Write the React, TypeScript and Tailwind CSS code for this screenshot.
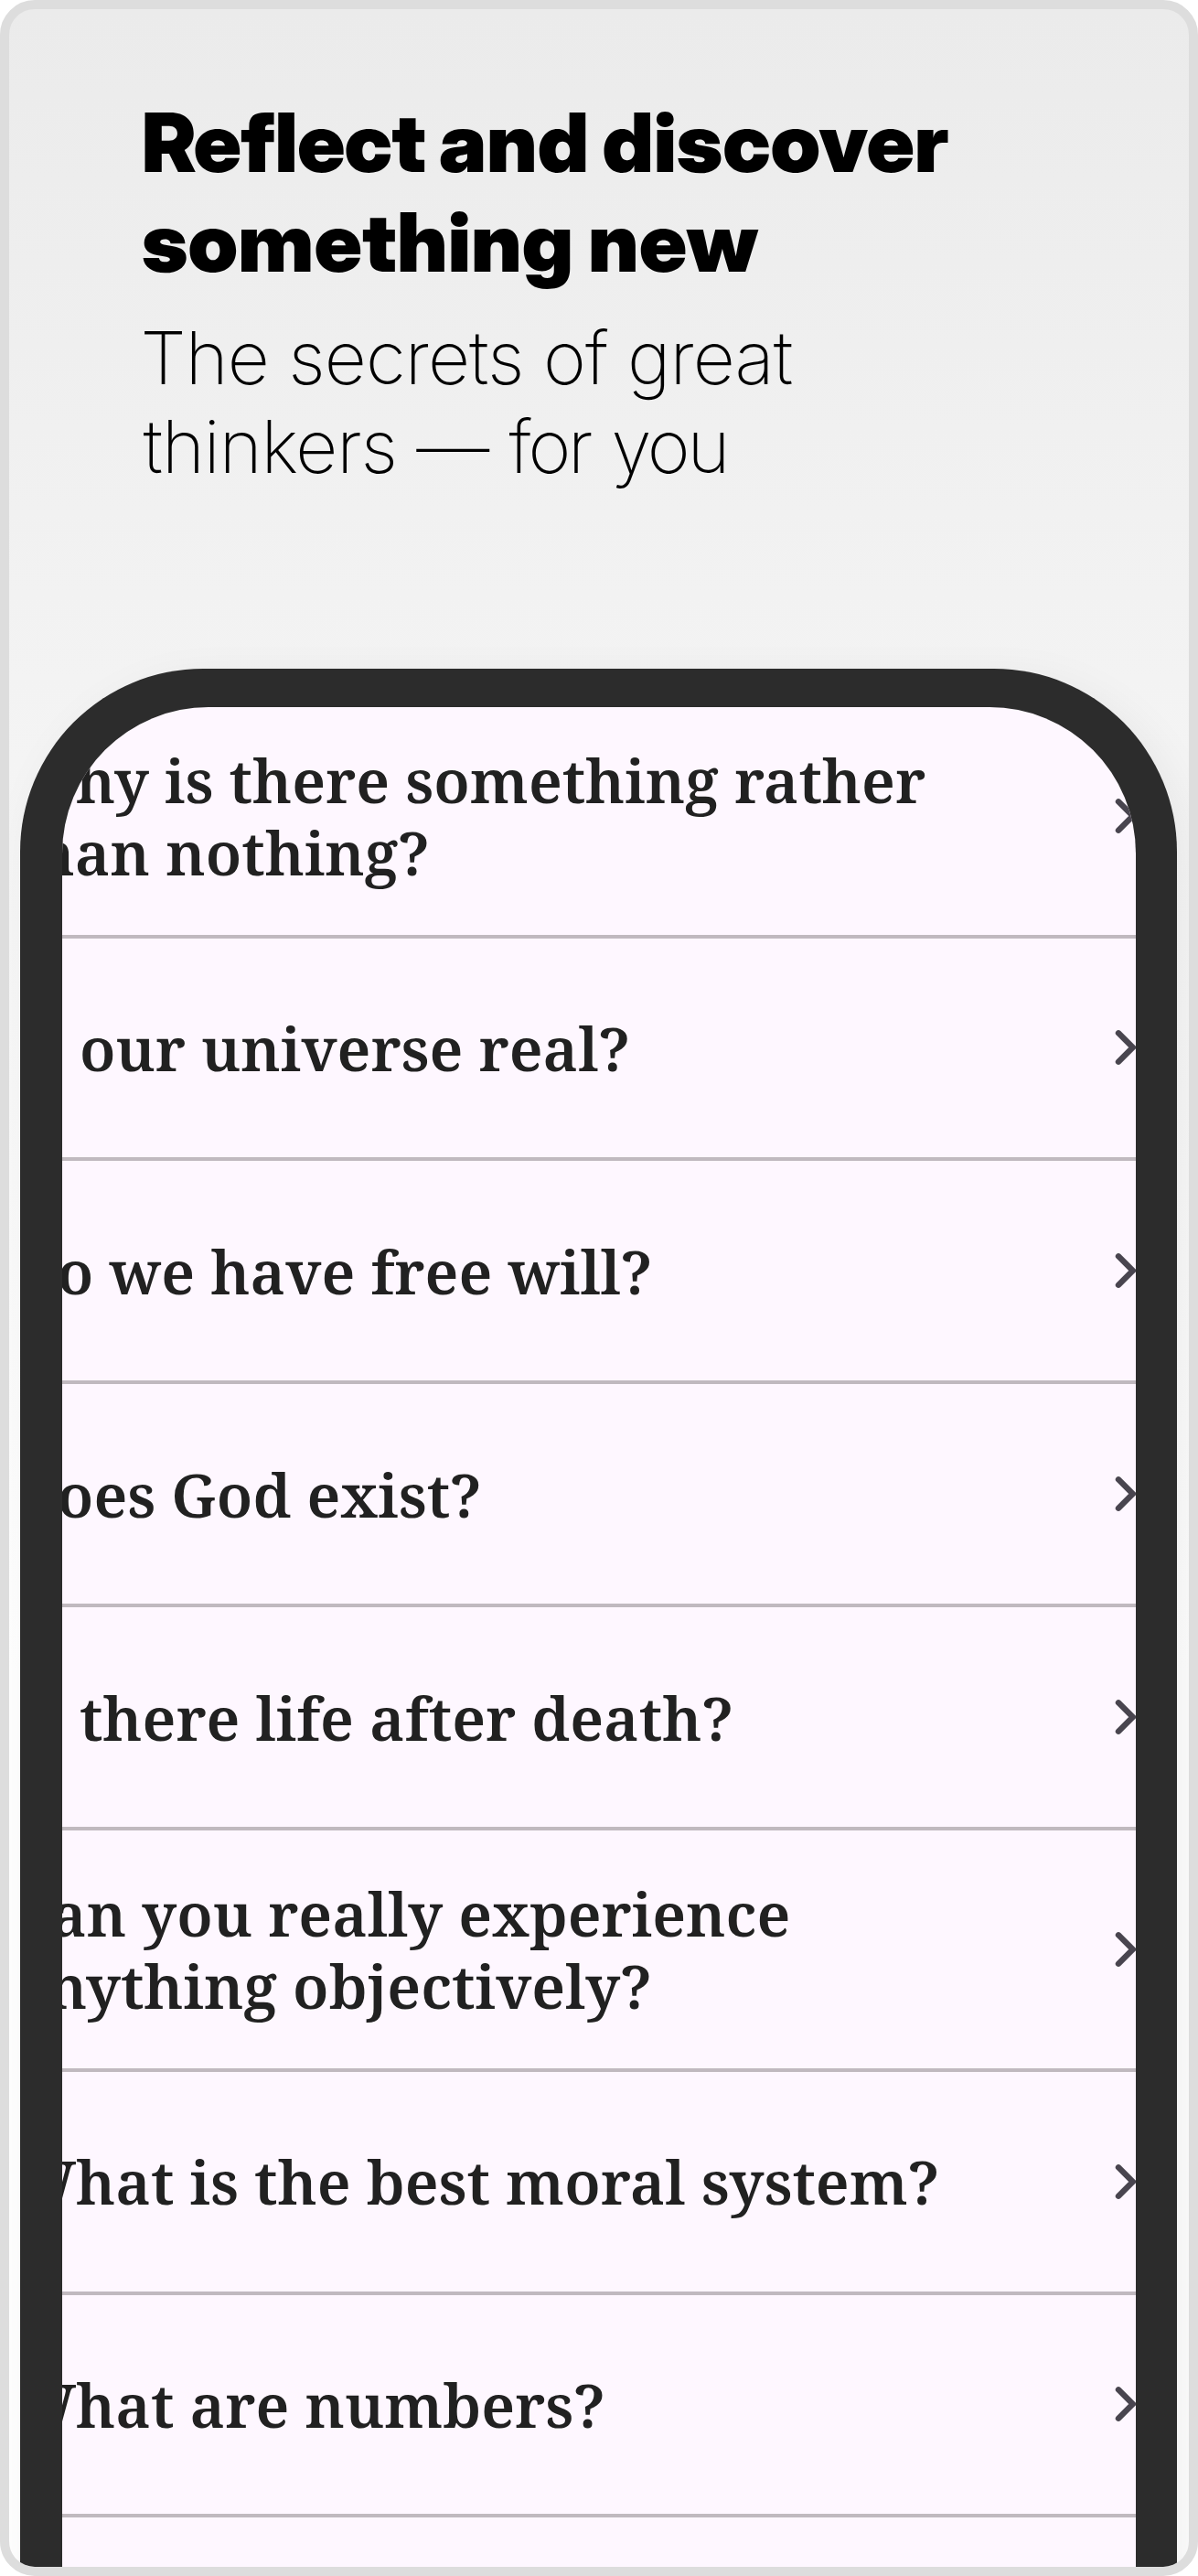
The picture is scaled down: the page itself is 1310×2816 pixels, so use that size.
import * as React from "react";

type Question = {
  lines: string[];
};

const questions: Question[] = [
  { lines: ["Why is there something rather", "than nothing?"] },
  { lines: ["Is our universe real?"] },
  { lines: ["Do we have free will?"] },
  { lines: ["Does God exist?"] },
  { lines: ["Is there life after death?"] },
  { lines: ["Can you really experience", "anything objectively?"] },
  { lines: ["What is the best moral system?"] },
  { lines: ["What are numbers?"] },
];

function Chevron() {
  return (
    <svg className="h-10 w-8 shrink-0" viewBox="0 0 32 40" fill="none">
      <path d="M5 4.3 20.7 20 5 35.7" stroke="#49454f" strokeWidth="6.4" strokeLinecap="round" />
    </svg>
  );
}

function QuestionRow({ question }: { question: Question }) {
  return (
    <div
      className={
        question.lines.length > 1
          ? "flex h-[263.6px] items-center border-b-4 border-[#c0b9bf]"
          : "flex h-[243.9px] items-center border-b-4 border-[#c0b9bf]"
      }
    >
      <div className="w-[1204.6px] shrink-0 text-[66px] leading-[78.7px] font-semibold">
        {question.lines.map((line) => (
          <div key={line} className="whitespace-nowrap">
            {line}
          </div>
        ))}
      </div>
      <Chevron />
    </div>
  );
}

export default function App() {
  return (
    <div className="h-[2816px] w-[1310px] overflow-hidden bg-white">
      <main className="flex h-full flex-col overflow-hidden rounded-[38px] border-10 border-[#dddddd] bg-linear-to-b from-[#ebebeb] to-white to-65%">
        <header className="h-[721px] shrink-0 pt-[91px] pl-[143.5px] text-black">
          <h1 className="ml-[1.5px] font-['Inter_Display','Inter',sans-serif] text-[90px] leading-[109px] font-black">
            <span className="block [word-spacing:-2px]">
              <span className="tracking-[-0.009em]">Reflect</span> and discover
            </span>
            <span className="block tracking-[0.002em] [word-spacing:-1px]">something new</span>
          </h1>
          <p className="mt-[23px] font-['Inter',sans-serif] text-[80px] leading-[97px] font-extralight">
            <span className="block tracking-[-0.0115em]">The secrets of great</span>
            <span className="ml-[3px] block tracking-[-0.0135em]">
              thinkers — <span className="ml-px tracking-[-0.04em] [word-spacing:4px]">for you</span>
            </span>
          </p>
        </header>

        {/* Phone runs off the bottom edge */}
        <div className="ml-[12.3px] h-[2200px] w-[1264.7px] shrink-0 rounded-t-[200px] bg-[#2c2c2c] pt-[42.3px] pr-[45px] pl-[45.7px] shadow-[12px_12px_50px_rgba(0,0,0,0.06)]">
          <div className="h-full overflow-hidden rounded-t-[160px] bg-[#fef7ff]">
            <div className="mt-[-11.4px] ml-[-54.8px] w-[1300px] font-['Noto_Serif',serif] text-[#212121]">
              {questions.map((question) => (
                <QuestionRow key={question.lines[0]} question={question} />
              ))}
            </div>
          </div>
        </div>
      </main>
    </div>
  );
}
